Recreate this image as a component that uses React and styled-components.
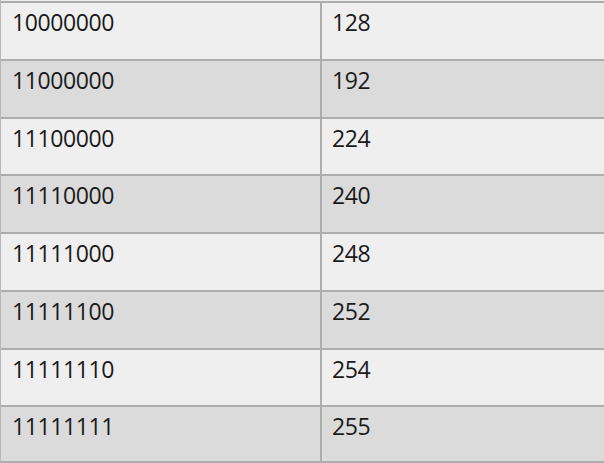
import React from "react";
import styled, { createGlobalStyle } from "styled-components";

const GlobalStyle = createGlobalStyle`
  html, body {
    margin: 0;
    padding: 0;
    background: #efefef;
  }
`;

const Table = styled.div`
  width: 604px;
  height: 463px;
  box-sizing: border-box;
  padding-top: 1px;
  display: grid;
  grid-template-columns: 321px 1fr;
  grid-template-rows: repeat(8, 1fr);
  font-family: "Open Sans", "Noto Sans", sans-serif;
  color: #1a1a1a;
  border-left: 1px solid #b8b8b8;
`;

const Cell = styled.div`
  box-sizing: border-box;
  background: ${p => (p.$dark ? "#dbdbdb" : "#efefef")};
  border-top: 2px solid #adadad;
  border-right: ${p => (p.$first ? "2px solid #adadad" : "none")};
  border-bottom: ${p => (p.$last ? "2px solid #adadad" : "none")};
  padding: 8px 0 0 ${p => (p.$first ? "11px" : "10px")};
  font-size: 23px;
  line-height: 23px;
  letter-spacing: -0.4px;
`;

const rows = [
  ["10000000", "128"],
  ["11000000", "192"],
  ["11100000", "224"],
  ["11110000", "240"],
  ["11111000", "248"],
  ["11111100", "252"],
  ["11111110", "254"],
  ["11111111", "255"],
];

const App = () => (
  <>
    <GlobalStyle />
    <Table>
      {rows.map(([bin, dec], i) => (
        <React.Fragment key={bin}>
          <Cell $first $dark={i % 2 === 1} $last={i === rows.length - 1}>
            {bin}
          </Cell>
          <Cell $dark={i % 2 === 1} $last={i === rows.length - 1}>
            {dec}
          </Cell>
        </React.Fragment>
      ))}
    </Table>
  </>
);

export default App;
